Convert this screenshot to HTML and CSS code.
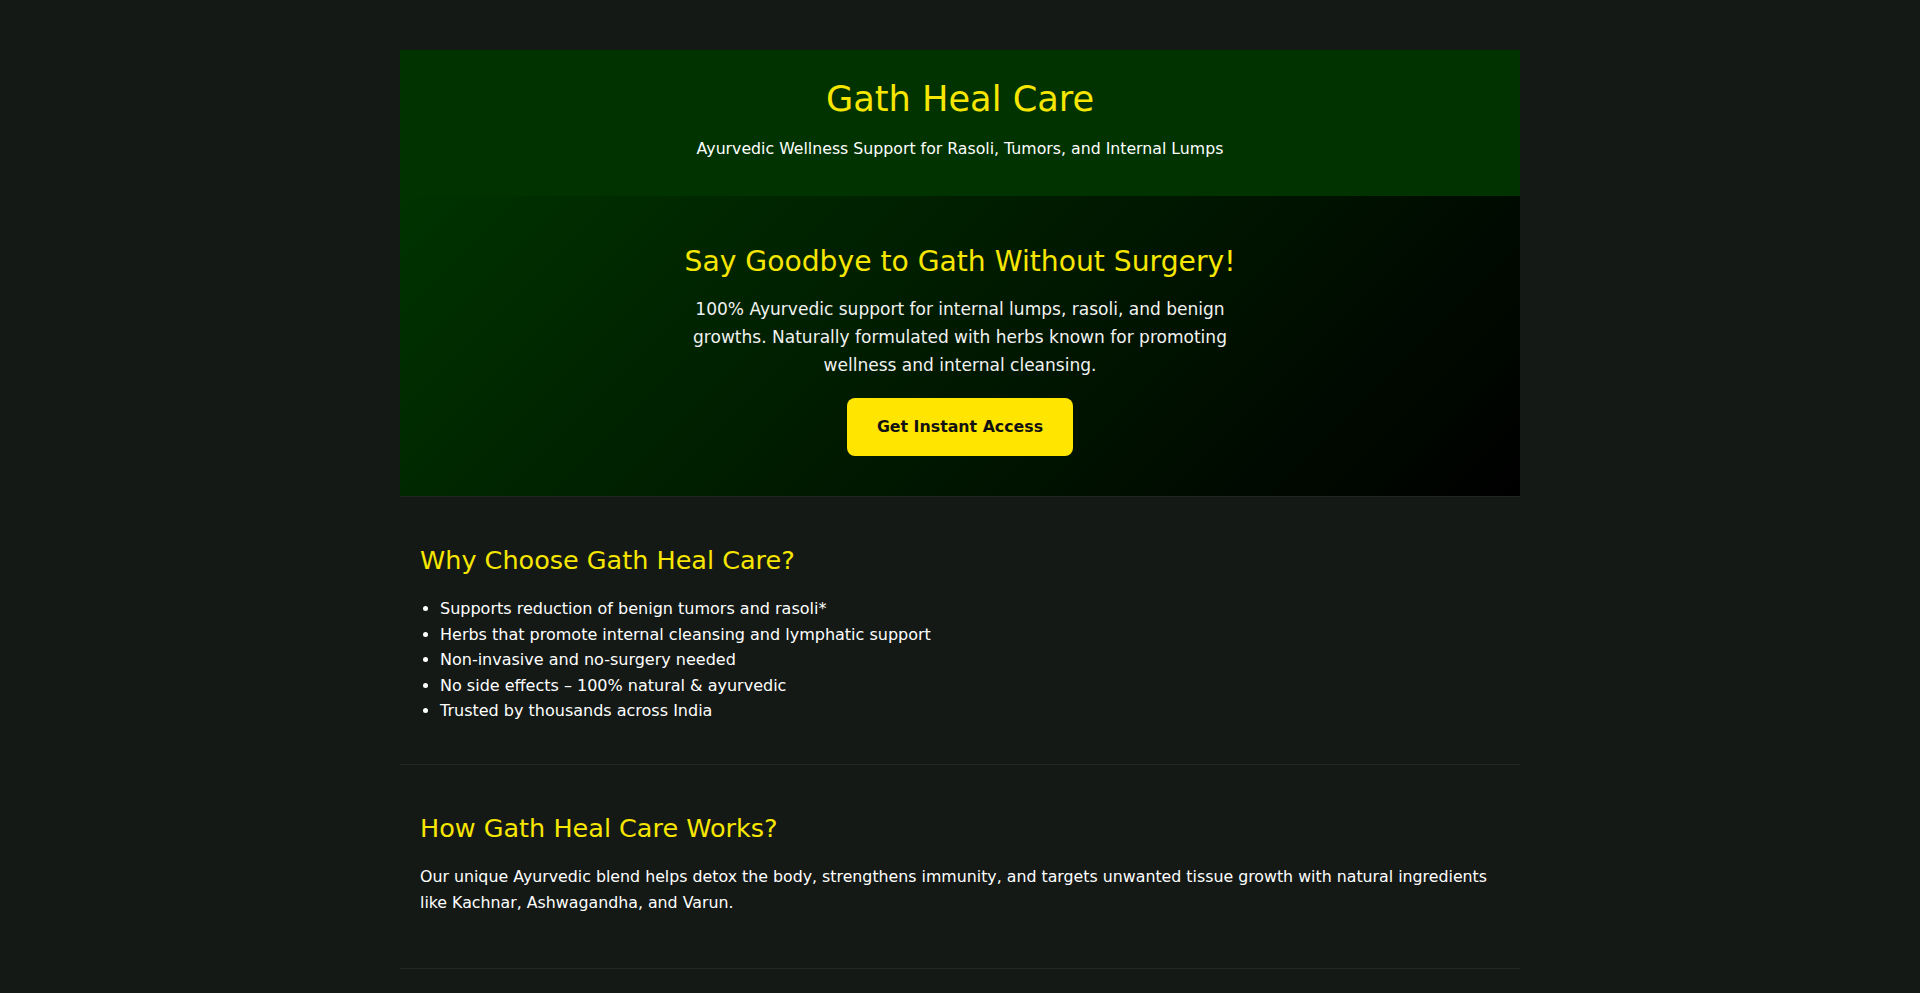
FILE: index.html
```html
<!DOCTYPE html>
<html lang="en">
<head>
<meta charset="utf-8">
<title>Gath Heal Care</title>
<link rel="stylesheet" href="styles.css">
</head>
<body>
<div class="container">
  <header class="site-header">
    <h1 class="brand">Gath Heal Care</h1>
    <p class="tagline">Ayurvedic Wellness Support for Rasoli, Tumors, and Internal Lumps</p>
  </header>

  <section class="hero">
    <h2 class="hero-title">Say Goodbye to Gath Without Surgery!</h2>
    <p class="hero-text">100% Ayurvedic support for internal lumps, rasoli, and benign growths. Naturally formulated with herbs known for promoting wellness and internal cleansing.</p>
    <a class="cta" href="#">Get Instant Access</a>
  </section>

  <section class="block block-why">
    <h2 class="block-title">Why Choose Gath Heal Care?</h2>
    <ul class="benefits">
      <li>Supports reduction of benign tumors and rasoli*</li>
      <li>Herbs that promote internal cleansing and lymphatic support</li>
      <li>Non-invasive and no-surgery needed</li>
      <li>No side effects – 100% natural &amp; ayurvedic</li>
      <li>Trusted by thousands across India</li>
    </ul>
  </section>

  <section class="block block-how">
    <h2 class="block-title">How Gath Heal Care Works?</h2>
    <p class="block-text">Our unique Ayurvedic blend helps detox the body, strengthens immunity, and targets unwanted tissue growth with natural ingredients like Kachnar, Ashwagandha, and Varun.</p>
  </section>
</div>
</body>
</html>
```
FILE: styles.css
```css
* { box-sizing: border-box; }

html, body {
  margin: 0;
  padding: 0;
  background: #141916;
  color: #ffffff;
  font-family: "DejaVu Sans", "Open Sans", sans-serif;
}

.container {
  width: 1120px;
  margin: 50px auto 0;
}

.site-header {
  background: #003300;
  text-align: center;
  padding: 28px 20px 35px;
}

.brand {
  margin: 0 0 17px;
  font-size: 35.2px;
  line-height: 42px;
  font-weight: 400;
  color: #f7e600;
}

.tagline {
  margin: 0;
  font-size: 15.76px;
  line-height: 24px;
  color: #ffffff;
}

.hero {
  background: linear-gradient(135deg, #003300 0%, #000000 100%);
  text-align: center;
  padding: 49px 20px 40px;
  border-bottom: 1px solid #1f2622;
  height: 301px;
}

.hero-title {
  margin: 0 0 16px;
  font-size: 28.2px;
  line-height: 34px;
  font-weight: 400;
  color: #f7e600;
}

.hero-text {
  margin: 0 auto 19px;
  max-width: 600px;
  font-size: 17.05px;
  line-height: 28px;
  color: #f2f2f2;
}

.cta {
  display: inline-block;
  background: #ffe500;
  color: #111111;
  text-decoration: none;
  font-weight: 700;
  font-size: 15.8px;
  line-height: 26px;
  padding: 16px 30px;
  border-radius: 8px;
}

.block {
  padding: 48px 20px 40px;
  border-bottom: 1px solid #232826;
}

.block-title {
  margin: 0 0 20px;
  font-size: 25.5px;
  line-height: 31px;
  font-weight: 400;
  color: #f7e600;
}

.benefits {
  margin: 0;
  padding-left: 20px;
  font-size: 16px;
  line-height: 25.6px;
}

.block-text {
  margin: 0 0 12px;
  font-size: 15.8px;
  line-height: 26px;
}
```
